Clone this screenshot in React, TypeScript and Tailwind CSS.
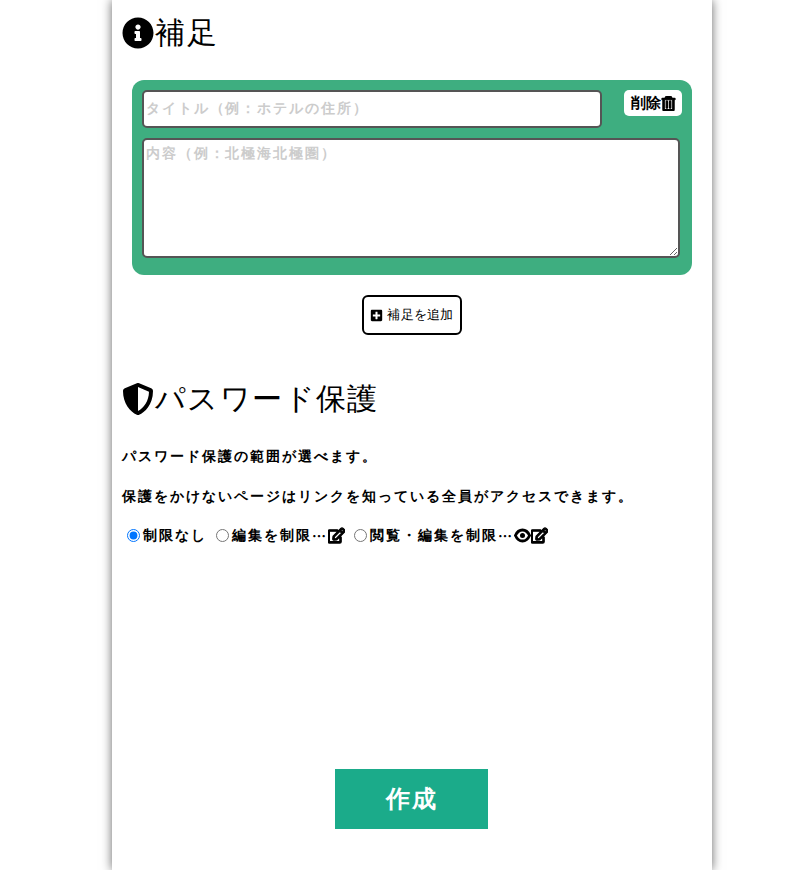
import { FaInfoCircle, FaShieldAlt, FaRegTrashAlt, FaPlusSquare, FaRegEdit } from 'react-icons/fa'

const font = '[font-family:"Liberation_Sans",sans-serif]'

function Section({ icon, title, className }: { icon: React.ReactNode; title: string; className?: string }) {
  return (
    <h2 className={`flex h-[36px] items-center text-[30px] leading-[36px] font-normal text-black ${className}`}>
      {icon}
      <span>{title}</span>
    </h2>
  )
}

function EyeIcon() {
  return (
    <svg width="17" height="17" viewBox="0 0 17 17" fill="none">
      <path d="M1.4 8.5C3 4.9 5.6 3 8.5 3s5.5 1.9 7.1 5.5c-1.6 3.6-4.2 5.5-7.1 5.5S3 12.100 1.400 8.500Z" stroke="currentColor" strokeWidth="2.800" />
      <circle cx="8.500" cy="8.500" r="2.500" fill="currentColor" />
    </svg>
  )
}

export default function App() {
  return (
    <div className={`h-[870px] overflow-hidden bg-white ${font}`}>
      <div className="ml-[112px] flex h-[870px] w-[600px] flex-col bg-white pl-[10px] shadow-[0_0_10px_rgba(0,0,0,0.6)]">
        <div className="pt-[15px]">
          <Section icon={<FaInfoCircle className="mr-[1px] text-[32px]" />} title="補足" className="tracking-[2px]" />
        </div>

        {/* 補足カード */}
        <div className="mt-[29px] ml-[10px] w-[560px] rounded-[12px] bg-[#3eae80] px-[10px] pt-[10px] pb-[17px]">
          <div className="flex items-start justify-between">
            <input
              placeholder="タイトル（例：ホテルの住所）"
              className="h-[38px] w-[460px] rounded-[5px] border-2 border-[#555] bg-white px-[2px] pb-[3px] text-[14px] font-bold tracking-[1.9px] outline-none placeholder:text-[#ccc]"
            />
            <button className="flex h-[26px] w-[58px] items-center justify-center rounded-[5px] bg-white text-[15px] font-bold text-black">
              削除
              <FaRegTrashAlt className="text-[15px]" stroke="currentColor" strokeWidth={40} />
            </button>
          </div>
          <textarea
            placeholder="内容（例：北極海北極圏）"
            className="mt-[10px] block h-[120px] w-[538px] rounded-[5px] border-2 border-[#555] bg-white px-[2px] pt-[3px] pb-0 text-[14px] font-bold tracking-[1.9px] outline-none placeholder:text-[#ccc]"
          />
        </div>

        <div className="mt-[20px] flex justify-center pr-[10px]">
          <button className="flex h-[40px] w-[100px] items-center justify-center gap-[4px] rounded-[6px] border-2 border-black bg-white text-[13px] tracking-[0.3px] text-black">
            <FaPlusSquare className="text-[13px]" />
            補足を追加
          </button>
        </div>

        <div className="mt-[46px]">
          <Section icon={<FaShieldAlt className="mr-[1px] text-[32px]" />} title="パスワード保護" className="tracking-[1.4px]" />
        </div>

        <p className="mt-[27px] text-[14px] leading-[24px] font-bold tracking-[2px] text-black">パスワード保護の範囲が選べます。</p>
        <p className="mt-[16px] text-[14px] leading-[24px] font-bold tracking-[2px] text-black">保護をかけないページはリンクを知っている全員がアクセスできます。</p>

        <div className="mt-[15px] flex items-center text-[14px] leading-[24px] font-bold tracking-[2px] text-black">
          <label className="ml-[5px] flex items-center">
            <input type="radio" name="protect" defaultChecked className="mr-[3px] ml-0 h-[13px] w-[13px]" />
            制限なし
          </label>
          <label className="ml-[9px] flex items-center">
            <input type="radio" name="protect" className="mr-[3px] h-[13px] w-[13px]" />
            編集を制限<span className='[font-family:"Noto_Sans_CJK_JP",sans-serif]'>…</span>
            <FaRegEdit className="text-[17px]" stroke="currentColor" strokeWidth={40} />
          </label>
          <label className="ml-[9px] flex items-center">
            <input type="radio" name="protect" className="mr-[3px] h-[13px] w-[13px]" />
            閲覧・編集を制限<span className='[font-family:"Noto_Sans_CJK_JP",sans-serif]'>…</span>
            <EyeIcon />
            <FaRegEdit className="text-[17px]" stroke="currentColor" strokeWidth={40} />
          </label>
        </div>

        <div className="mt-[222px] flex justify-center pr-[11px]">
          <button className="h-[60px] w-[153px] bg-[#1bab8a] text-[24px] font-bold tracking-[2px] text-white">作成</button>
        </div>
      </div>
    </div>
  )
}
